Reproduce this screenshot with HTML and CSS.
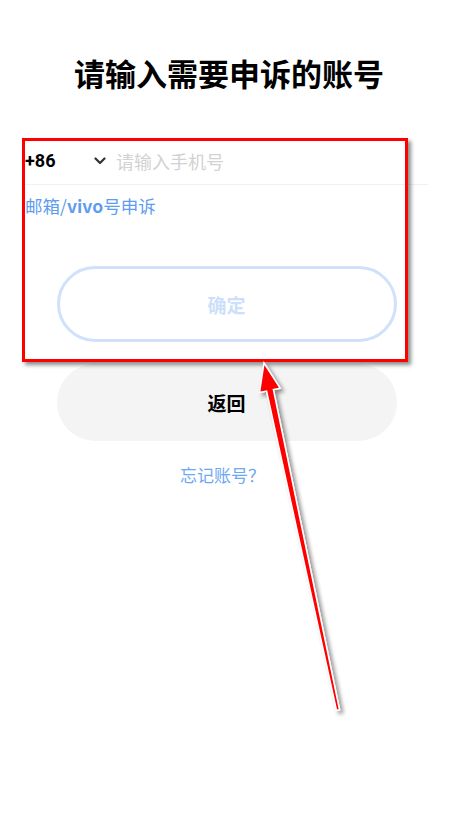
FILE: index.html
```
<!DOCTYPE html>
<html>
<head>
	<meta charset="utf-8">
	<meta name="viewport" content="width=device-width, initial-scale=1">
	<title>账号申诉</title>
	<link rel="stylesheet" href="styles.css">
</head>
<body>
	<div class="page">
		<h1 class="title">请输入需要申诉的账号</h1>
		<form class="form" onsubmit="return false">
			<div class="phone-row">
				<span class="area-code">+86</span>
				<svg class="chevron" width="14" height="14" viewBox="0 0 14 14">
					<path d="M2.5 4.5 L7 9 L11.5 4.5" fill="none" stroke="#333" stroke-width="2.2" stroke-linecap="round" stroke-linejoin="round"/>
				</svg>
				<input class="phone-input" type="tel" placeholder="请输入手机号">
			</div>
			<a class="alt-link" href="#">邮箱/<b>vivo</b>号申诉</a>
			<button type="button" class="btn btn-confirm">确定</button>
			<button type="button" class="btn btn-back">返回</button>
			<a class="forgot" href="#">忘记账号？</a>
		</form>

		<!-- annotation: highlight box and arrow -->
		<div class="mark-box"></div>
		<svg class="mark-arrow" width="458" height="820" viewBox="0 0 458 820">
			<defs>
				<filter id="drop" x="-20%" y="-20%" width="140%" height="140%">
					<feGaussianBlur in="SourceAlpha" stdDeviation="2"/>
					<feOffset dx="3" dy="3" result="blur"/>
					<feComponentTransfer><feFuncA type="linear" slope="0.45"/></feComponentTransfer>
					<feMerge><feMergeNode/><feMergeNode in="SourceGraphic"/></feMerge>
				</filter>
			</defs>
			<polygon filter="url(#drop)" points="264,363 280.1,388.2 273.4,389.6 339.5,709.7 336.5,710.3 266.6,391.1 259.5,392.6" fill="#f00" stroke="#fff" stroke-width="1.5" stroke-linejoin="miter"/>
		</svg>
	</div>
</body>
</html>
```

FILE: styles.css
```
body {
	margin: 0;
	background: #fff;
	font-family: "Noto Sans CJK SC", "Noto Sans", sans-serif;
	color: #000;
}

.page {
	position: relative;
	width: 458px;
	height: 820px;
	overflow: hidden;
}

.title {
	margin: 51px 0 0;
	font-size: 31px;
	line-height: 44px;
	font-weight: 700;
	text-align: center;
}

.form {
	display: flex;
	flex-direction: column;
	margin-top: 42px;
	padding: 0 30px 0 25px;
}

.phone-row {
	display: flex;
	align-items: center;
	height: 47px;
	border-bottom: 1px solid #f1f1f1;
}

.area-code {
	width: 68px;
	font-size: 18px;
	font-weight: 700;
	font-family: "Roboto", "Noto Sans", sans-serif;
}

.chevron {
	display: block;
	margin-right: 9px;
}

.phone-input {
	flex: 1;
	border: none;
	outline: none;
	padding: 0;
	font-family: inherit;
	font-size: 18px;
	background: transparent;
}

.phone-input::placeholder {
	color: #d2d2d2;
}

.alt-link {
	margin-top: 9px;
	line-height: 24px;
	font-size: 17.5px;
	color: #5d9cf0;
	text-decoration: none;
}

.alt-link b {
	font-weight: 700;
}

.btn {
	display: block;
	width: 340px;
	margin: 0 auto;
	border-radius: 40px;
	font-family: inherit;
	font-size: 19px;
	font-weight: 700;
}

.btn-confirm {
	margin-top: 48px;
	height: 76px;
	border: 3px solid #cfe1fb;
	background: #fff;
	color: #cddffa;
}

.btn-back {
	margin-top: 22px;
	height: 77px;
	border: none;
	background: #f4f4f4;
	color: #000;
}

.forgot {
	margin-top: 22px;
	line-height: 24px;
	font-size: 17px;
	text-align: center;
	color: #6ea7f1;
	text-decoration: none;
	padding-right: 8px;
}

.mark-box {
	position: absolute;
	left: 22px;
	top: 138px;
	width: 380px;
	height: 218px;
	border: 3px solid #f00;
	box-shadow: 3px 3px 4px rgba(0, 0, 0, 0.45);
}

.mark-arrow {
	position: absolute;
	left: 0;
	top: 0;
	pointer-events: none;
}
```
